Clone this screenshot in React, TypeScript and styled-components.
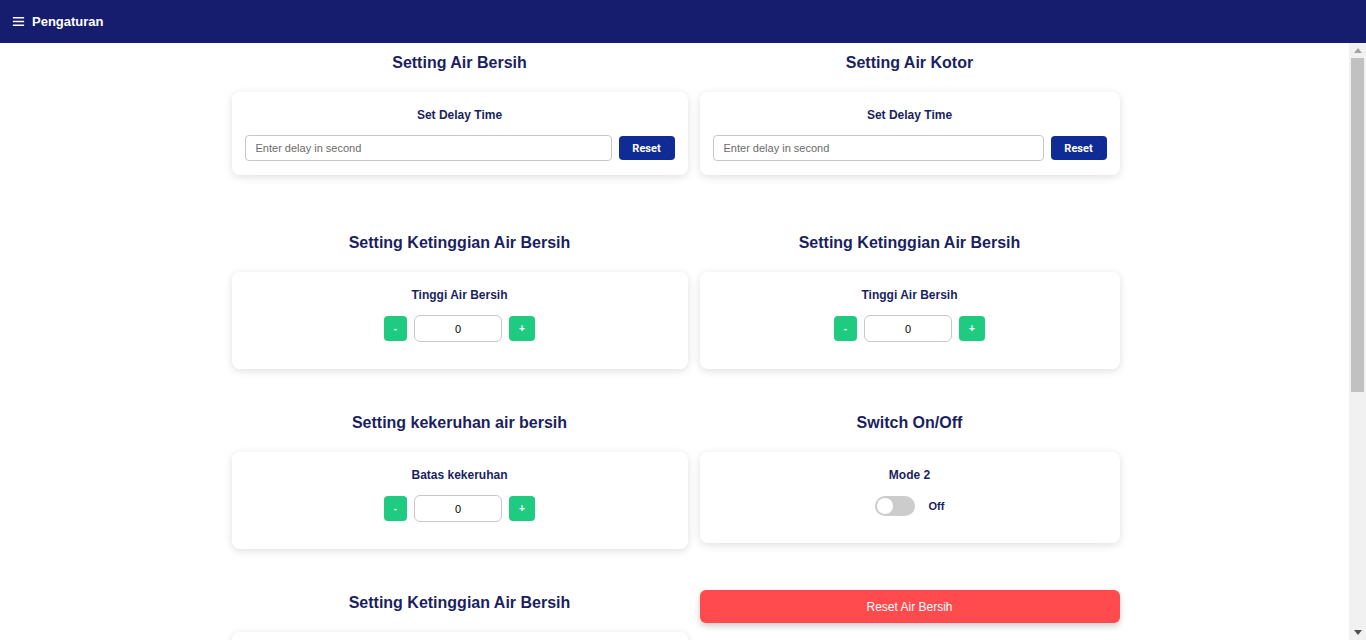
import React, { useState } from "react";
import styled, { createGlobalStyle } from "styled-components";

const GlobalStyle = createGlobalStyle`
  html, body { margin: 0; padding: 0; height: 100%; overflow: hidden; }
  body { font-family: "Liberation Sans", Arial, sans-serif; background: #ffffff; }
  * { box-sizing: border-box; }
`;

const Page = styled.div`
  display: flex;
  flex-direction: column;
  height: 100vh;
`;

const TopBar = styled.header`
  height: 43px;
  flex: 0 0 43px;
  background: #161c6e;
  display: flex;
  align-items: center;
  gap: 6px;
  padding-left: 11px;
  color: #ffffff;
  font-weight: 700;
  font-size: 13px;
`;

const Body = styled.div`
  flex: 1;
  display: flex;
  min-height: 0;
`;

const Scroller = styled.main`
  flex: 1;
  overflow: hidden;
  padding-bottom: 290px;
`;

const Rail = styled.div`
  width: 17px;
  flex: 0 0 17px;
  background: #f1f1f1;
  display: flex;
  flex-direction: column;
  align-items: center;
`;

const RailArrow = styled.div`
  height: 15px;
  width: 100%;
  display: flex;
  align-items: center;
  justify-content: center;
`;

const Thumb = styled.div`
  width: 13px;
  height: 334px;
  background: #c1c1c1;
`;

const Spacer = styled.div`
  flex: 1;
`;

const Grid = styled.div`
  display: grid;
  grid-template-columns: 456px 420px;
  column-gap: 12px;
  grid-auto-rows: 180px;
  justify-content: center;
  padding-left: 2px;
`;

const Section = styled.section`
  display: flex;
  flex-direction: column;
  align-items: stretch;
`;

const Title = styled.h3`
  margin: 10px 0 20px;
  font-size: 16px;
  line-height: 19px;
  font-weight: 700;
  color: #1b1f62;
  text-align: center;
`;

const Card = styled.div<{ $extra?: number }>`
  background: #ffffff;
  border-radius: 8px;
  box-shadow: 0 2px 8px rgba(0, 0, 0, 0.13);
  padding: 16px 13px ${(p) => 14 + (p.$extra ?? 0)}px;
  display: flex;
  flex-direction: column;
  align-items: center;
`;

const Label = styled.div`
  font-size: 12px;
  line-height: 15px;
  font-weight: 700;
  color: #1b1f62;
  margin-bottom: 12px;
  text-align: center;
`;

const InputRow = styled.div`
  display: flex;
  align-self: stretch;
  align-items: center;
  gap: 7px;
`;

const DelayInput = styled.input`
  flex: 1;
  height: 26px;
  border: 1px solid #c8c8c8;
  border-radius: 4px;
  padding: 0 10px;
  font-family: "Liberation Sans", Arial, sans-serif;
  font-size: 11px;
  color: #333;
  outline: none;
  &::placeholder { color: #6b6b6b; }
`;

const ResetButton = styled.button`
  width: 56px;
  height: 24px;
  border: none;
  border-radius: 4px;
  background: #0f2b96;
  color: #ffffff;
  font-family: Roboto, "Liberation Sans", sans-serif;
  font-weight: 700;
  font-size: 11px;
  cursor: pointer;
`;

const StepRow = styled.div`
  display: flex;
  align-items: center;
  gap: 7px;
  height: 27px;
`;

const StepButton = styled.button<{ $w: number }>`
  width: ${(p) => p.$w}px;
  height: 25px;
  border: none;
  border-radius: 4px;
  background: #1ecb80;
  color: #ffffff;
  font-family: "Liberation Sans", Arial, sans-serif;
  font-weight: 700;
  font-size: 10px;
  padding: 0;
  cursor: pointer;
`;

const StepInput = styled.input`
  width: 88px;
  height: 27px;
  border: 1px solid #c8c8c8;
  border-radius: 6px;
  text-align: center;
  font-family: "Liberation Sans", Arial, sans-serif;
  font-size: 11px;
  color: #000000;
  background: #ffffff;
  outline: none;
`;

const ToggleRow = styled.div`
  display: flex;
  align-items: center;
  gap: 14px;
  height: 20px;
  margin-top: 1px;
  margin-bottom: -1px;
`;

const Track = styled.button<{ $on: boolean }>`
  position: relative;
  width: 40px;
  height: 20px;
  border: none;
  border-radius: 10px;
  background: ${(p) => (p.$on ? "#1ecb80" : "#cccccc")};
  padding: 0;
  cursor: pointer;
`;

const Knob = styled.span<{ $on: boolean }>`
  position: absolute;
  top: 2px;
  left: ${(p) => (p.$on ? "22px" : "2px")};
  width: 16px;
  height: 16px;
  border-radius: 50%;
  background: #ffffff;
`;

const ToggleText = styled.span`
  font-size: 11px;
  font-weight: 700;
  color: #1b1f62;
`;

const DangerButton = styled.button`
  margin-top: 7px;
  height: 33px;
  border: none;
  border-radius: 6px;
  background: #ff4b4e;
  color: #ffffff;
  font-family: "Liberation Sans", Arial, sans-serif;
  font-size: 12px;
  box-shadow: 0 3px 6px rgba(0, 0, 0, 0.2);
  cursor: pointer;
`;

const MenuIcon = () => (
  <svg width="15" height="15" viewBox="0 0 24 24" fill="none">
    <path d="M3 6h18M3 12h18M3 18h18" stroke="#ffffff" strokeWidth="2.4" />
  </svg>
);

const Arrow = ({ up, color }: { up: boolean; color: string }) => (
  <svg width="8" height="5" viewBox="0 0 8 5">
    <path d={up ? "M0 5L4 0L8 5Z" : "M0 0L8 0L4 5Z"} fill={color} />
  </svg>
);

const DelayCard = () => (
  <Card>
    <Label>Set Delay Time</Label>
    <InputRow>
      <DelayInput placeholder="Enter delay in second" />
      <ResetButton>Reset</ResetButton>
    </InputRow>
  </Card>
);

const Stepper = ({ label }: { label: string }) => {
  const [v, setV] = useState(0);
  return (
    <Card $extra={13}>
      <Label>{label}</Label>
      <StepRow>
        <StepButton $w={23} onClick={() => setV(v - 1)}>-</StepButton>
        <StepInput value={v} readOnly />
        <StepButton $w={26} onClick={() => setV(v + 1)}>+</StepButton>
      </StepRow>
    </Card>
  );
};

const SwitchCard = () => {
  const [on, setOn] = useState(false);
  return (
    <Card $extra={14}>
      <Label>Mode 2</Label>
      <ToggleRow>
        <Track $on={on} onClick={() => setOn(!on)}>
          <Knob $on={on} />
        </Track>
        <ToggleText>{on ? "On" : "Off"}</ToggleText>
      </ToggleRow>
    </Card>
  );
};

export default function App() {
  return (
    <>
      <GlobalStyle />
      <Page>
        <TopBar>
          <MenuIcon />
          Pengaturan
        </TopBar>
        <Body>
          <Scroller>
            <Grid>
              <Section>
                <Title>Setting Air Bersih</Title>
                <DelayCard />
              </Section>
              <Section>
                <Title>Setting Air Kotor</Title>
                <DelayCard />
              </Section>
              <Section>
                <Title>Setting Ketinggian Air Bersih</Title>
                <Stepper label="Tinggi Air Bersih" />
              </Section>
              <Section>
                <Title>Setting Ketinggian Air Bersih</Title>
                <Stepper label="Tinggi Air Bersih" />
              </Section>
              <Section>
                <Title>Setting kekeruhan air bersih</Title>
                <Stepper label="Batas kekeruhan" />
              </Section>
              <Section>
                <Title>Switch On/Off</Title>
                <SwitchCard />
              </Section>
              <Section>
                <Title>Setting Ketinggian Air Bersih</Title>
                <Stepper label="Tinggi Air Kotor" />
              </Section>
              <Section>
                <DangerButton>Reset Air Bersih</DangerButton>
              </Section>
            </Grid>
          </Scroller>
          <Rail>
            <RailArrow>
              <Arrow up color="#a3a3a3" />
            </RailArrow>
            <Thumb />
            <Spacer />
            <RailArrow>
              <Arrow up={false} color="#505050" />
            </RailArrow>
          </Rail>
        </Body>
      </Page>
    </>
  );
}
